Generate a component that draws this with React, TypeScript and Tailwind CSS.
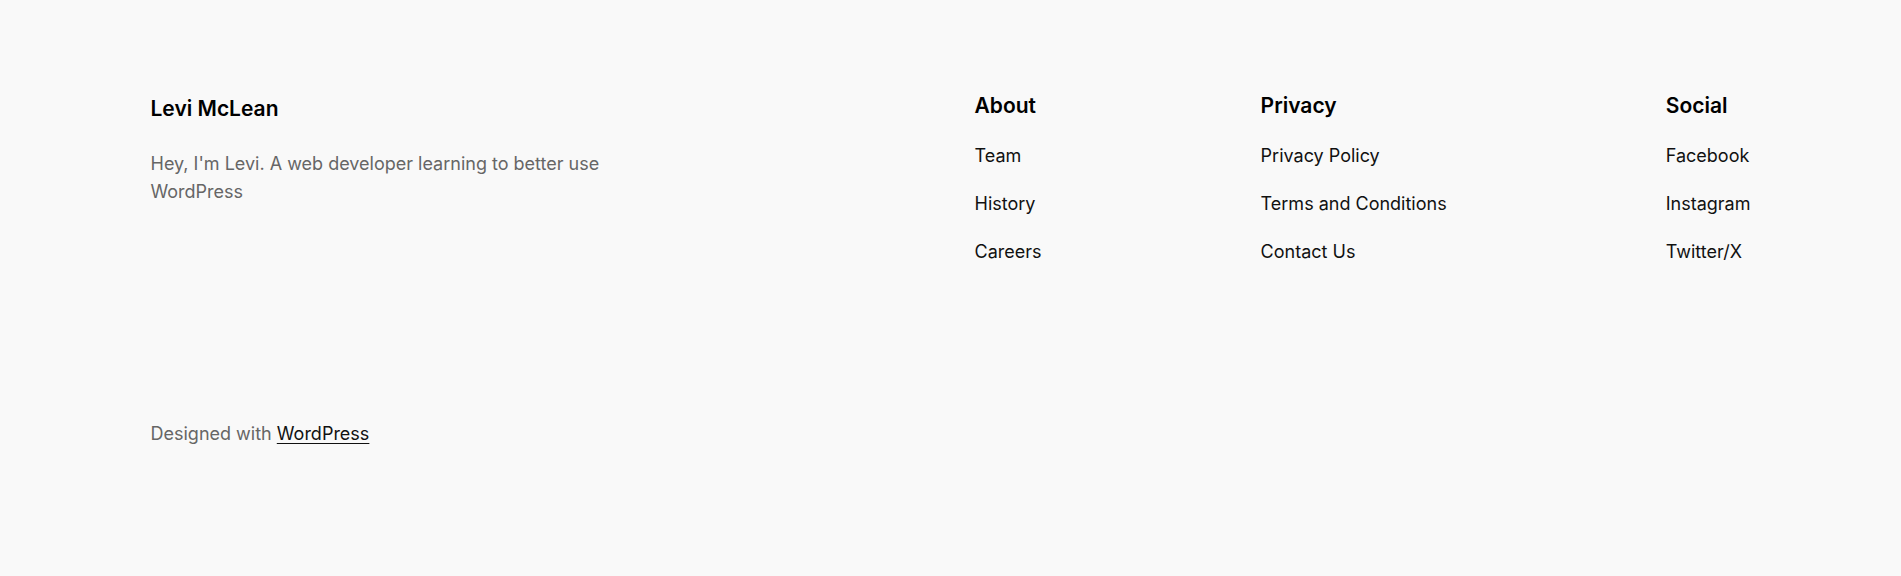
export default function App() {
  const groups = [
    { title: "About", links: ["Team", "History", "Careers"] },
    { title: "Privacy", links: ["Privacy Policy", "Terms and Conditions", "Contact Us"] },
    { title: "Social", links: ["Facebook", "Instagram", "Twitter/X"] },
  ];

  return (
    <div className="min-h-screen bg-[#f9f9f9] font-['Inter',sans-serif] text-[#111111]">
      <footer className="mx-auto w-[1600px] pt-[94px]">
        <div className="flex justify-between">
          {/* サイト名と紹介文 */}
          <div className="w-[500px]">
            <h2 className="pt-[1px] text-[21px] font-semibold leading-[28px] text-black">Levi McLean</h2>
            <p className="mt-[27px] text-[18px] leading-[28px] text-[#666666]">
              Hey, I'm Levi. A web developer learning to better use WordPress
            </p>
          </div>

          {/* リンク群 */}
          <div className="flex w-[776px] justify-between">
            {groups.map((g) => (
              <div key={g.title}>
                <h2 className="text-[21px] font-semibold leading-[24px] text-black">{g.title}</h2>
                <ul className="mt-[24px] flex flex-col gap-[20px]">
                  {g.links.map((l) => (
                    <li key={l}>
                      <a href="#" className="text-[18px] leading-[28px] text-[#111111]">
                        {l}
                      </a>
                    </li>
                  ))}
                </ul>
              </div>
            ))}
          </div>
        </div>

        <p className="mt-[154px] text-[18px] leading-[28px] text-[#666666]">
          Designed with{" "}
          <a href="#" className="text-[#111111] underline underline-offset-[3px]">
            WordPress
          </a>
        </p>
      </footer>
    </div>
  );
}
